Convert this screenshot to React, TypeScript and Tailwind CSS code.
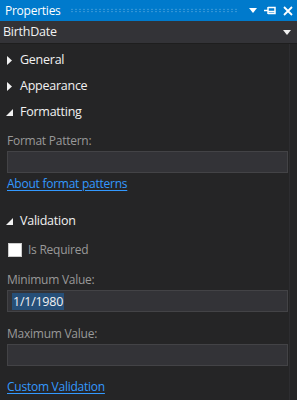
import React from 'react';

const font = { fontFamily: '"Open Sans", "Noto Sans", sans-serif', letterSpacing: '-0.25px' };

function Collapsed() {
  return (
    <svg width="6" height="9" viewBox="0 0 6 9" className="shrink-0">
      <path d="M0 0 L5 4.5 L0 9 Z" fill="#f1f1f1" />
    </svg>
  );
}

function Expanded() {
  return (
    <svg width="7" height="7" viewBox="0 0 7 7" className="shrink-0">
      <path d="M7 0 L7 7 L0 7 Z" fill="#f1f1f1" />
    </svg>
  );
}

function Section({ title, open }: { title: string; open?: boolean }) {
  return (
    <div className="flex items-center h-[26px] pl-[6px] gap-[7px] text-[12.5px] text-[#f1f1f1]">
      <div className="w-[7px] flex justify-center">{open ? <Expanded /> : <Collapsed />}</div>
      <span>{title}</span>
    </div>
  );
}

function Field({ label, value }: { label: string; value?: string }) {
  return (
    <div className="px-[7px]">
      <div className="text-[12px] text-[#999999] h-[18px] leading-[18px]">{label}</div>
      <div className="mt-[1px] h-[22px] w-[281px] bg-[#333337] border border-[#434346] flex items-center px-[4px]">
        {value && <span className="bg-[#264f78] text-[#f1f1f1] text-[12.5px] leading-[17px] px-[1px]">{value}</span>}
      </div>
    </div>
  );
}

function Link({ text }: { text: string }) {
  return <div className="px-[7px] text-[12px] text-[#3399ff] underline underline-offset-2">{text}</div>;
}

export default function App() {
  return (
    <div className="w-[297px] h-[400px] bg-[#252526] overflow-hidden relative" style={font}>
      <div className="h-[21px] bg-[#007acc] flex items-center pl-[5px] pr-[4px] text-white">
        <span className="text-[12px] leading-none">Properties</span>
        <div
          className="flex-1 ml-[9px] mr-[10px] h-[5px]"
          style={{
            backgroundImage: 'radial-gradient(circle, rgba(255,255,255,0.28) 0.6px, transparent 0.9px)',
            backgroundSize: '4px 2.5px',
          }}
        />
        <div className="flex items-center gap-[7px]">
          <svg width="8" height="5" viewBox="0 0 8 5">
            <path d="M0 0 H8 L4 5 Z" fill="white" />
          </svg>
          <svg width="12" height="9" viewBox="0 0 12 9">
            <path d="M0 4.5 H4 M4 1 V8 M4 1.5 H11 V7.5 H4 M4 5.5 H11" stroke="white" strokeWidth="1.5" fill="none" />
          </svg>
          <svg width="10" height="10" viewBox="0 0 10 10">
            <path d="M1 1 L9 9 M9 1 L1 9" stroke="white" strokeWidth="1.8" />
          </svg>
        </div>
      </div>
      <div className="h-[23px] bg-[#333337] border-b border-[#1e1e1e] flex items-center pl-[3px] pr-[6px] text-[#f1f1f1]">
        <span className="flex-1 text-[12.5px]">BirthDate</span>
        <svg width="8" height="5" viewBox="0 0 8 5">
          <path d="M0 0 H8 L4 5 Z" fill="#f1f1f1" />
        </svg>
      </div>
      <div className="pt-[3px]">
        <Section title="General" />
        <Section title="Appearance" />
        <Section title="Formatting" open />
        <div className="pt-[7px]">
          <Field label="Format Pattern:" />
        </div>
        <div className="pt-[2px]">
          <Link text="About format patterns" />
        </div>
        <div className="pt-[15px]">
          <Section title="Validation" open />
        </div>
        <div className="flex items-center gap-[6px] pl-[8px] pt-[4px] h-[28px]">
          <div className="w-[14px] h-[14px] bg-white border border-[#cccccc]" />
          <span className="text-[12px] text-[#999999]">Is Required</span>
        </div>
        <div className="pt-[9px]">
          <Field label="Minimum Value:" value="1/1/1980" />
        </div>
        <div className="pt-[13px]">
          <Field label="Maximum Value:" />
        </div>
        <div className="pt-[12px]">
          <Link text="Custom Validation" />
        </div>
      </div>
      <div className="absolute top-[44px] right-0 bottom-0 w-[8px] border-l border-[#2d2d30]" />
    </div>
  );
}
